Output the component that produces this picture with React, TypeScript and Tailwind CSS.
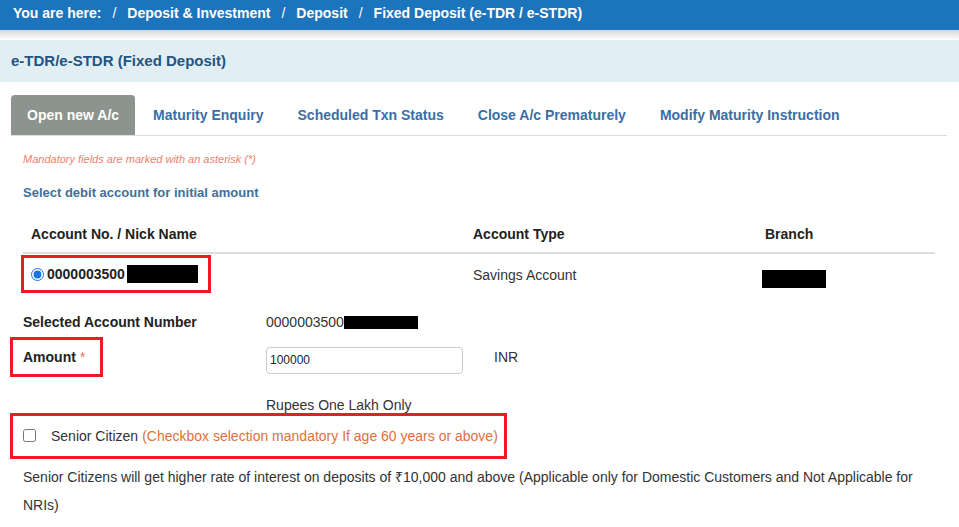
import React, { useState } from 'react';

const tabs = ['Open new A/c', 'Maturity Enquiry', 'Scheduled Txn Status', 'Close A/c Prematurely', 'Modify Maturity Instruction'];

const crumbs = ['Deposit & Investment', 'Deposit', 'Fixed Deposit (e-TDR / e-STDR)'];

const App: React.FC = () => {
  const [activeTab, setActiveTab] = useState(0);
  const [amount, setAmount] = useState('100000');
  const [senior, setSenior] = useState(false);

  return (
    <div className="w-[959px] h-[527px] overflow-hidden bg-white font-['Liberation_Sans',Arial,sans-serif] text-[#333]">
      {/* Breadcrumb */}
      <div className="h-[30px] bg-[#1c74bd] px-[13px] pt-[4px] leading-[18px] text-[14px] font-bold text-white whitespace-nowrap">
        You are here:
        {crumbs.map((c) => (
          <span key={c}>
            <span className="font-normal mx-[11px]">/</span>
            {c}
          </span>
        ))}
      </div>
      <div className="h-[10px] bg-gradient-to-b from-[#d6d6d6] via-[#ececec] to-white" />

      {/* Section title */}
      <div className="h-[42px] bg-[#e1eef3] flex items-center px-[11px] text-[15px] font-bold text-[#24547f]">
        e-TDR/e-STDR (Fixed Deposit)
      </div>

      <div className="ml-[11px] mr-[12px]">
        {/* Tabs */}
        <div className="mt-[13px] flex gap-[2px] border-b border-[#dddddd]">
          {tabs.map((t, i) => (
            <button
              key={t}
              onClick={() => setActiveTab(i)}
              className={
                i === activeTab
                  ? 'h-[40px] px-4 rounded-t-[4px] bg-[#8b948f] text-white text-[14px] font-bold whitespace-nowrap'
                  : 'h-[40px] px-4 text-[#3a6ea5] text-[14px] font-bold whitespace-nowrap'
              }
            >
              {t}
            </button>
          ))}
        </div>

        <div className="px-3">
          <p className="mt-[16px] leading-[14px] text-[11px] italic text-[#f0806a]">
            Mandatory fields are marked with an asterisk (*)
          </p>
          <p className="mt-[19px] leading-[16px] text-[13px] font-bold text-[#3e6f9c]">
            Select debit account for initial amount
          </p>

          {/* Account table */}
          <div className="mt-[15px] grid grid-cols-[442px_292px_178px] border-b-2 border-[#dddddd] h-[38px] items-center text-[14px] font-bold text-[#222]">
            <div className="pl-2">Account No. / Nick Name</div>
            <div className="pl-2">Account Type</div>
            <div className="pl-2">Branch</div>
          </div>
          <div className="grid grid-cols-[442px_292px_178px] h-[46px] text-[14px]">
            <div>
              <div className="-ml-[2px] mt-[1px] inline-flex items-center h-[38px] border-[3px] border-[#ed1c24] pl-[7px] pr-[10px]">
                <input type="radio" defaultChecked name="acct" className="w-[13px] h-[13px] m-0 accent-[#1a73e8]" />
                <span className="ml-[3px] font-bold text-[#222]">0000003500</span>
                <span className="ml-[2px] inline-block w-[71px] h-[18px] bg-black" />
              </div>
            </div>
            <div className="pl-2 pt-[12px] leading-[18px]">Savings Account</div>
            <div className="pl-[5px] pt-[16px]">
              <span className="block w-[64px] h-[18px] bg-black" />
            </div>
          </div>

          {/* Selected account */}
          <div className="mt-[13px] flex items-center h-[18px] text-[14px]">
            <div className="w-[243px] font-bold text-[#222]">Selected Account Number</div>
            <span>0000003500</span>
            <span className="inline-block w-[74px] h-[13px] bg-black" />
          </div>

          {/* Amount */}
          <div className="mt-[6px] flex items-center h-[40px] text-[14px]">
            <div className="w-[243px]">
              <div className="-ml-[13px] w-[93px] h-[40px] border-[3px] border-[#ed1c24] pl-[10px] flex items-center font-bold text-[#222]">
                Amount<span className="ml-[4px] text-[#f07060] font-normal">*</span>
              </div>
            </div>
            <input
              value={amount}
              onChange={(e) => setAmount(e.target.value)}
              className="mt-[6px] w-[197px] h-[27px] rounded-[4px] border border-[#cccccc] px-[3px] text-[12px] text-[#222] outline-none"
            />
            <span className="ml-[31px] text-[#333]">INR</span>
          </div>

          <div className="mt-[19px] ml-[243px] leading-[18px] text-[14px]">Rupees One Lakh Only</div>

          {/* Senior citizen */}
          <div className="-ml-[13px] mt-[-1px] w-[497px] h-[46px] border-[3px] border-[#ed1c24] pl-[10px] flex items-center text-[14px]">
            <input
              type="checkbox"
              checked={senior}
              onChange={(e) => setSenior(e.target.checked)}
              className="w-[13px] h-[13px] m-0 mb-[2px]"
            />
            <span className="ml-[15px] text-[#333]">Senior Citizen</span>
            <span className="ml-[4px] text-[#e0703a]">(Checkbox selection mandatory If age 60 years or above)</span>
          </div>

          <p className="mt-[4px] text-[14px] leading-[28px] text-[#333]">
            Senior Citizens will get higher rate of interest on deposits of ₹10,000 and above (Applicable only for Domestic Customers and Not Applicable for NRIs)
          </p>
        </div>
      </div>
    </div>
  );
};

export default App;
